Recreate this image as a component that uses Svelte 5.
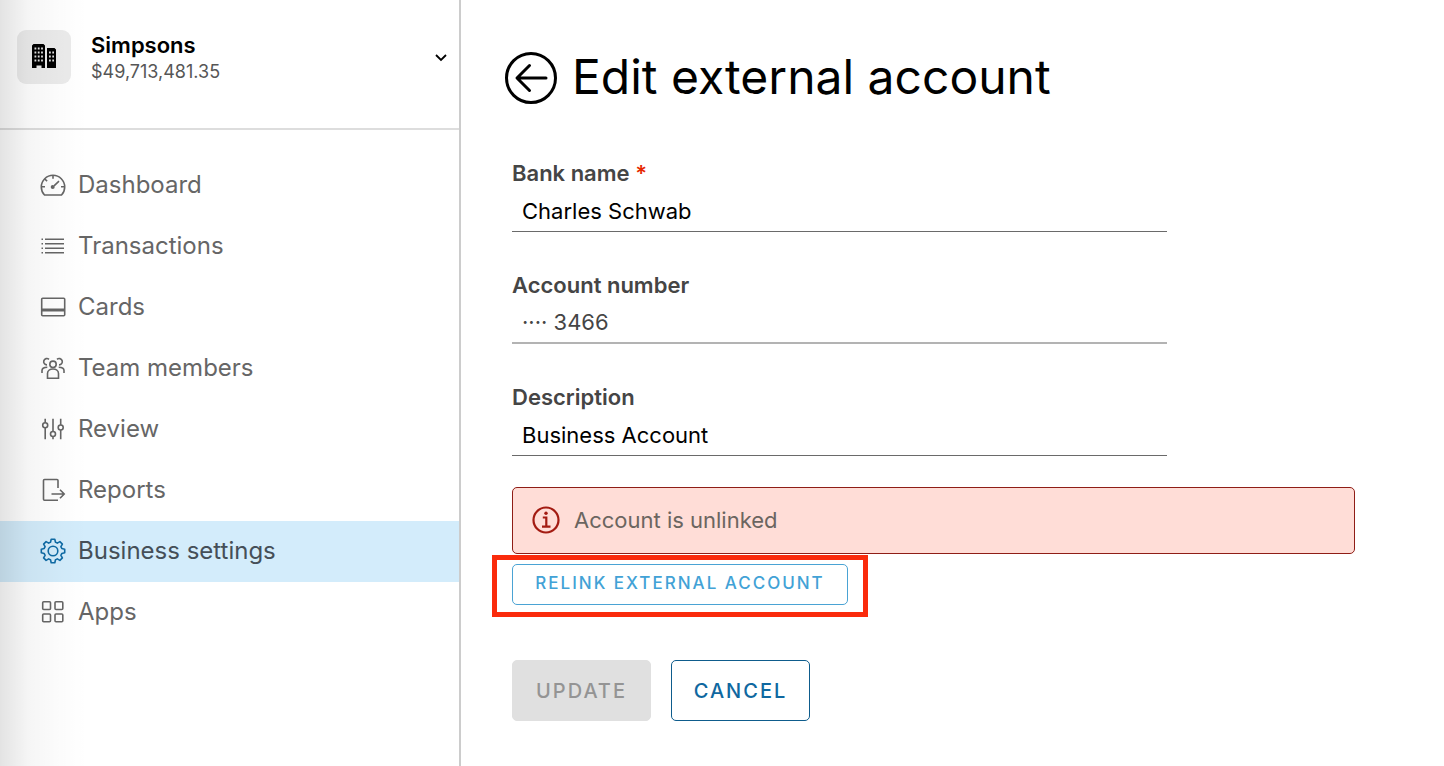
<script lang="ts">
	const links = [
		{ label: 'Dashboard', icon: 'dashboard' },
		{ label: 'Transactions', icon: 'list' },
		{ label: 'Cards', icon: 'card' },
		{ label: 'Team members', icon: 'team' },
		{ label: 'Review', icon: 'sliders' },
		{ label: 'Reports', icon: 'export' },
		{ label: 'Business settings', icon: 'gear' },
		{ label: 'Apps', icon: 'apps' }
	];

	const active = 'Business settings';

	let bankName = $state('Charles Schwab');
	let accountNumber = $state('···· 3466');
	let description = $state('Business Account');
</script>

<div class="shell">
	<aside class="sidebar">
		<button type="button" class="business">
			<span class="avatar">
				<svg viewBox="0 0 24 26" width="24" height="26" aria-hidden="true">
					<path d="M1.500 0h10L13 1.500V24H9.500v-2.500H4.500V24H0V1.500zM15 4h7.500L24 5.500V24h-9z" fill="#000" />
					<path
						d="M2.500 4.500h8.500M2.500 8.500h8.500M2.500 12.500h8.500M2.500 16.500h8.500M17 8.500h5M17 12.500h5M17 16.500h5"
						stroke="#e3e3e3"
						stroke-width="1.800"
						stroke-dasharray="1.800 1.500"
					/>
				</svg>
			</span>
			<span class="business-copy">
				<strong>Simpsons</strong>
				<span class="balance">$49,713,481.35</span>
			</span>
			<svg class="chevron" viewBox="0 0 12 8" width="12" height="8" aria-hidden="true">
				<path d="M1 1l5 5 5-5" fill="none" stroke="#000" stroke-width="1.800" />
			</svg>
		</button>

		<nav>
			{#each links as link}
				<a href="#{link.icon}" class:active={link.label === active}>
					<svg class="icon" viewBox="0 0 26 26" width="26" height="26" aria-hidden="true">
						{#if link.icon === 'dashboard'}
							<path d="M4.500 23h17c2-2 3.200-4.700 3.200-8A11.700 11.700 0 0 0 1.300 15c0 3.300 1.200 6 3.200 8z" />
							<path d="M13 3.300v3.500M1.500 14.800h3.500M21 14.800h3.500M4.800 7l2.300 2.200M14 13.800l5-4.600" />
							<circle cx="12.700" cy="15" r="2" fill="currentColor" stroke="none" />
						{:else if link.icon === 'list'}
							<path d="M5 6.200h19M5 10.700h19M5 15.300h19M5 19.800h19" />
							<path d="M1.500 6.200H3M1.500 10.700H3M1.500 15.300H3M1.500 19.800H3" />
						{:else if link.icon === 'card'}
							<rect x="1.700" y="4.200" width="23" height="17.600" rx="1" />
							<path d="M1.700 16h23" stroke-width="3" />
						{:else if link.icon === 'team'}
							<circle cx="13" cy="9.300" r="3.200" />
							<path d="M7.500 23.200v-4.700c0-6 11-6 11 0v4.700zM9 4.300a3.200 3.200 0 1 0-2 5.600M17 4.300a3.200 3.200 0 1 1 2 5.600" />
							<path d="M2 18v-2.500c0-2.200 2-3.300 5.300-3.300M24 18v-2.500c0-2.200-2-3.300-5.300-3.300" />
						{:else if link.icon === 'sliders'}
							<circle cx="5.200" cy="9.200" r="2.500" />
							<circle cx="13" cy="18" r="2.500" />
							<circle cx="20.700" cy="11.500" r="2.500" />
							<path d="M5.200 2.800v3.900M5.200 11.700v11.500M13 2.800v12.700M13 20.500v2.700M20.700 2.800V9M20.700 14v9.200" />
						{:else if link.icon === 'export'}
							<path d="M18 11V3.500a1 1 0 0 0-1-1H4.500a1 1 0 0 0-1 1v18.800a1 1 0 0 0 1 1H18M11.500 17H24M20 12.800l4.200 4.200-4.200 4.200" />
						{:else if link.icon === 'gear'}
							<circle cx="13" cy="13" r="4.800" />
							<path
								d="M10.500 4.200l.7-2.900h3.600l.7 2.900q1 .3 1.800.9l2.600-1.500 2.500 2.500-1.500 2.600q.6.800.9 1.800l2.900.7v3.600l-2.900.7q-.3 1-.9 1.800l1.500 2.600-2.500 2.500-2.600-1.500q-.8.600-1.800.9l-.7 2.900h-3.600l-.7-2.900q-1-.3-1.800-.9l-2.600 1.500-2.500-2.500 1.500-2.600q-.6-.8-.9-1.800l-2.900-.7v-3.600l2.900-.7q.3-1 .9-1.800L3.600 6.100l2.500-2.500 2.600 1.500q.8-.6 1.800-.9z"
								stroke-linejoin="round"
							/>
						{:else}
							<rect x="2.700" y="2.700" width="7.800" height="7.800" rx="1" />
							<rect x="15" y="2.700" width="7.800" height="7.800" rx="1" />
							<rect x="2.700" y="15" width="7.800" height="7.800" rx="1" />
							<rect x="15" y="15" width="7.800" height="7.800" rx="1" />
						{/if}
					</svg>
					{link.label}
				</a>
			{/each}
		</nav>
	</aside>

	<main>
		<header>
			<a class="back" href="#accounts" aria-label="Back">
				<svg viewBox="0 0 52 52" width="52" height="52" aria-hidden="true">
					<circle cx="26" cy="26" r="24.500" />
					<path d="M41 26H12.500M24.500 13.500L12 26l12.500 12.500" stroke-linecap="round" stroke-linejoin="round" />
				</svg>
			</a>
			<h1>Edit external account</h1>
		</header>

		<form>
			<div class="field">
				<label for="bank">Bank name <span class="required">*</span></label>
				<input id="bank" type="text" bind:value={bankName} />
			</div>
			<div class="field">
				<label for="number">Account number</label>
				<input id="number" type="text" bind:value={accountNumber} disabled />
			</div>
			<div class="field">
				<label for="description">Description</label>
				<input id="description" type="text" bind:value={description} />
			</div>

			<div class="alert" role="alert">
				<svg viewBox="0 0 28 28" width="28" height="28" aria-hidden="true">
					<circle cx="14" cy="14" r="12.500" />
					<path d="M10.800 11.500h3.500v9M10 20.700h8.500" />
					<circle class="dot" cx="14" cy="7.300" r="1.700" />
				</svg>
				<span>Account is unlinked</span>
			</div>

			<div class="relink">
				<button type="button" class="small">RELINK EXTERNAL ACCOUNT</button>
			</div>

			<div class="actions">
				<button type="submit" disabled>UPDATE</button>
				<button type="button">CANCEL</button>
			</div>
		</form>
	</main>
</div>

<style>
	:global(body) {
		margin: 0;
		background: #fff;
	}

	.shell {
		display: flex;
		min-height: 100vh;
		font-family: Inter, 'Open Sans', sans-serif;
		color: #000;
	}

	.sidebar {
		position: relative;
		box-sizing: border-box;
		flex: 0 0 461px;
		border-right: 2px solid #ccc;
	}

	/* shadow cast on the left edge of the panel */
	.sidebar::after {
		content: '';
		position: absolute;
		inset: 0 auto 0 0;
		width: 88px;
		background: linear-gradient(90deg, rgba(0, 0, 0, 0.11), rgba(0, 0, 0, 0.04) 32%, rgba(0, 0, 0, 0.01) 70%, transparent);
		pointer-events: none;
	}

	.business {
		display: flex;
		align-items: flex-start;
		box-sizing: border-box;
		width: 100%;
		height: 130px;
		padding: 30px 12px 0 17px;
		border: 0;
		border-bottom: 2px solid #ddd;
		background: none;
		font: inherit;
		color: inherit;
		text-align: left;
	}

	.avatar {
		display: flex;
		align-items: center;
		justify-content: center;
		width: 54px;
		height: 54px;
		margin-right: 20px;
		border-radius: 9px;
		background: #ebebeb;
	}

	.business-copy {
		display: flex;
		flex: 1;
		flex-direction: column;
	}

	.business strong {
		font-size: 22px;
		font-weight: 600;
		line-height: 30px;
	}

	.balance {
		font-size: 18px;
		line-height: 24px;
		color: #565656;
	}

	.chevron {
		margin-top: 24px;
	}

	nav {
		padding-top: 25px;
	}

	nav a {
		display: flex;
		align-items: center;
		gap: 12px;
		box-sizing: border-box;
		height: 61px;
		padding: 0 0 2px 40px;
		font-size: 24px;
		line-height: 32px;
		color: #666;
		text-decoration: none;
	}

	.icon {
		fill: none;
		stroke: currentColor;
		stroke-width: 1.6;
	}

	nav .active {
		background: #d3ecfb;
		color: #454f58;
	}

	.active .icon {
		color: #0f6ba5;
	}

	main {
		flex: 1;
		min-width: 0;
		padding: 47px 89px 40px 44px;
	}

	header {
		display: flex;
		align-items: center;
		gap: 15px;
	}

	.back {
		display: flex;
		flex: none;
		padding-top: 2px;
	}

	.back svg {
		fill: none;
		stroke: #000;
		stroke-width: 3;
	}

	h1 {
		margin: 0;
		font-size: 48px;
		font-weight: 400;
		line-height: 60px;
	}

	form {
		margin: 54px 0 0 7px;
	}

	.field {
		max-width: 655px;
		margin-bottom: 41px;
	}

	label {
		display: block;
		font-size: 22px;
		font-weight: 600;
		line-height: 24px;
		color: #454545;
	}

	.required {
		color: #e62700;
	}

	input {
		display: block;
		box-sizing: border-box;
		width: 100%;
		height: 47px;
		padding: 5px 10px 0;
		border: 0;
		border-bottom: 1px solid #6a6a6a;
		border-radius: 0;
		background: none;
		font: inherit;
		font-size: 22px;
		color: #000;
	}

	input:disabled {
		border-bottom: 2px solid #b3b3b3;
		color: #454545;
	}

	.alert {
		display: flex;
		align-items: center;
		gap: 14px;
		box-sizing: border-box;
		height: 67px;
		margin-top: -10px;
		padding: 0 19px 2px;
		border: 1px solid #8f1d16;
		border-radius: 5px;
		background: #ffddd7;
		font-size: 22px;
		color: #6b6560;
	}

	.alert svg {
		fill: none;
		stroke: #a31b12;
		stroke-width: 2.2;
	}

	.alert .dot {
		fill: #a31b12;
		stroke: none;
	}

	button {
		box-sizing: border-box;
		font: inherit;
	}

	.relink {
		position: relative;
		width: fit-content;
		margin-top: 10px;
	}

	.relink::after {
		content: '';
		position: absolute;
		inset: -9px -20px -12px;
		border: 5px solid #fa2b0c;
		pointer-events: none;
	}

	.small,
	.actions button {
		display: block;
		padding: 0 20px;
		border: 1px solid #0e5c8c;
		border-radius: 5px;
		background: #fff;
		font-size: 20px;
		font-weight: 500;
		letter-spacing: 2px;
		color: #0f68a0;
	}

	.small {
		min-width: 336px;
		height: 41px;
		padding-bottom: 4px;
		border-color: #4aa3d4;
		font-size: 17px;
		color: #42a2d6;
	}

	.actions {
		display: flex;
		gap: 20px;
		margin-top: 55px;
	}

	.actions button {
		min-width: 139px;
		height: 61px;
	}

	.actions button:disabled {
		border-color: #e0e0e0;
		background: #e0e0e0;
		color: #949494;
	}
</style>
